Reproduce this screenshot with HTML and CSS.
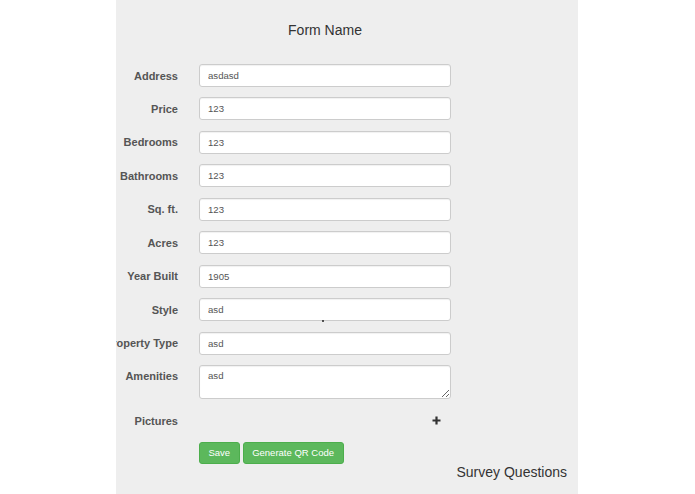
FILE: index.html
```html
<!DOCTYPE html>
<html lang="en">
<head>
<meta charset="utf-8">
<title>Form Name</title>
<link rel="stylesheet" href="styles.css">
</head>
<body>
<div class="panel">
  <h1 class="form-title">Form Name</h1>
  <form class="form">
    <div class="row"><label class="label">Address</label><input class="field" type="text" value="asdasd"></div>
    <div class="row"><label class="label">Price</label><input class="field" type="text" value="123"></div>
    <div class="row"><label class="label">Bedrooms</label><input class="field" type="text" value="123"></div>
    <div class="row"><label class="label">Bathrooms</label><input class="field" type="text" value="123"></div>
    <div class="row"><label class="label">Sq. ft.</label><input class="field" type="text" value="123"></div>
    <div class="row"><label class="label">Acres</label><input class="field" type="text" value="123"></div>
    <div class="row"><label class="label">Year Built</label><input class="field" type="text" value="1905"></div>
    <div class="row"><label class="label">Style</label><input class="field" type="text" value="asd"></div>
    <div class="row"><label class="label">Property Type</label><input class="field" type="text" value="asd"></div>
    <div class="row row-top"><label class="label">Amenities</label><textarea class="field area">asd</textarea></div>
    <div class="row"><label class="label">Pictures</label>
      <div class="pics">
        <svg class="plus" width="9" height="9" viewBox="0 0 9 9" aria-hidden="true"><path d="M4.5 0.5v8M0.5 4.5h8" stroke="#333" stroke-width="2.2" fill="none"/></svg>
      </div>
    </div>
    <div class="row actions">
      <span class="spacer"></span>
      <div class="buttons">
        <button type="button" class="btn">Save</button>
        <button type="button" class="btn">Generate QR Code</button>
      </div>
    </div>
  </form>
  <div class="survey">Survey Questions</div>
  <span class="cursor-dot"></span>
</div>
</body>
</html>
```
FILE: styles.css
```css
html, body {
  margin: 0;
  padding: 0;
  background: #ffffff;
}

body {
  font-family: "Liberation Sans", Arial, sans-serif;
  color: #333333;
}

.panel {
  position: relative;
  width: 462px;
  height: 494px;
  margin: 0 117px 0 116px;
  background: #eeeeee;
  overflow: hidden;
  box-sizing: border-box;
  padding-top: 20px;
}

.form-title {
  margin: 0 0 0 83px;
  width: 252px;
  text-align: center;
  font-size: 14px;
  line-height: 20px;
  font-weight: normal;
  color: #333333;
}

.form {
  margin: 24px 0 0 0;
  display: flex;
  flex-direction: column;
  gap: 10.45px;
}

.row {
  display: flex;
  align-items: center;
  gap: 21px;
  height: 23px;
}

.row-top {
  align-items: flex-start;
  height: auto;
}

.label {
  flex: 0 0 62px;
  width: 62px;
  height: 23px;
  display: flex;
  align-items: center;
  justify-content: flex-end;
  white-space: nowrap;
  font-size: 11px;
  font-weight: bold;
  color: #555555;
}

.field {
  box-sizing: border-box;
  width: 252px;
  height: 23px;
  margin: 0;
  padding: 0 8px;
  border: 1px solid #cccccc;
  border-radius: 3px;
  background: #ffffff;
  box-shadow: inset 0 1px 1px rgba(0, 0, 0, 0.06);
  font-family: "Liberation Sans", Arial, sans-serif;
  font-size: 9.6px;
  color: #555555;
  outline: none;
}

.area {
  height: 34px;
  padding: 3px 8px 0 8px;
  line-height: 14px;
  resize: vertical;
  display: block;
}

.pics {
  width: 252px;
  display: flex;
  justify-content: flex-end;
  align-items: center;
  padding-right: 10px;
  box-sizing: border-box;
}

.plus {
  display: block;
}

.actions {
  height: 22px;
  margin-top: -0.9px;
}

.spacer {
  flex: 0 0 62px;
}

.buttons {
  display: flex;
  gap: 3px;
}

.btn {
  box-sizing: border-box;
  height: 22px;
  margin: 0;
  padding: 0 8.5px;
  border: 1px solid #4cae4c;
  border-radius: 3px;
  background: #5cb85c;
  color: #ffffff;
  font-family: "Liberation Sans", Arial, sans-serif;
  font-size: 9.5px;
  line-height: 20px;
}

.survey {
  padding-right: 11px;
  text-align: right;
  font-size: 14px;
  line-height: 16px;
  color: #333333;
}

.cursor-dot {
  position: absolute;
  left: 206px;
  top: 319.5px;
  width: 2px;
  height: 2px;
  border-radius: 50%;
  background: #222222;
}
```
